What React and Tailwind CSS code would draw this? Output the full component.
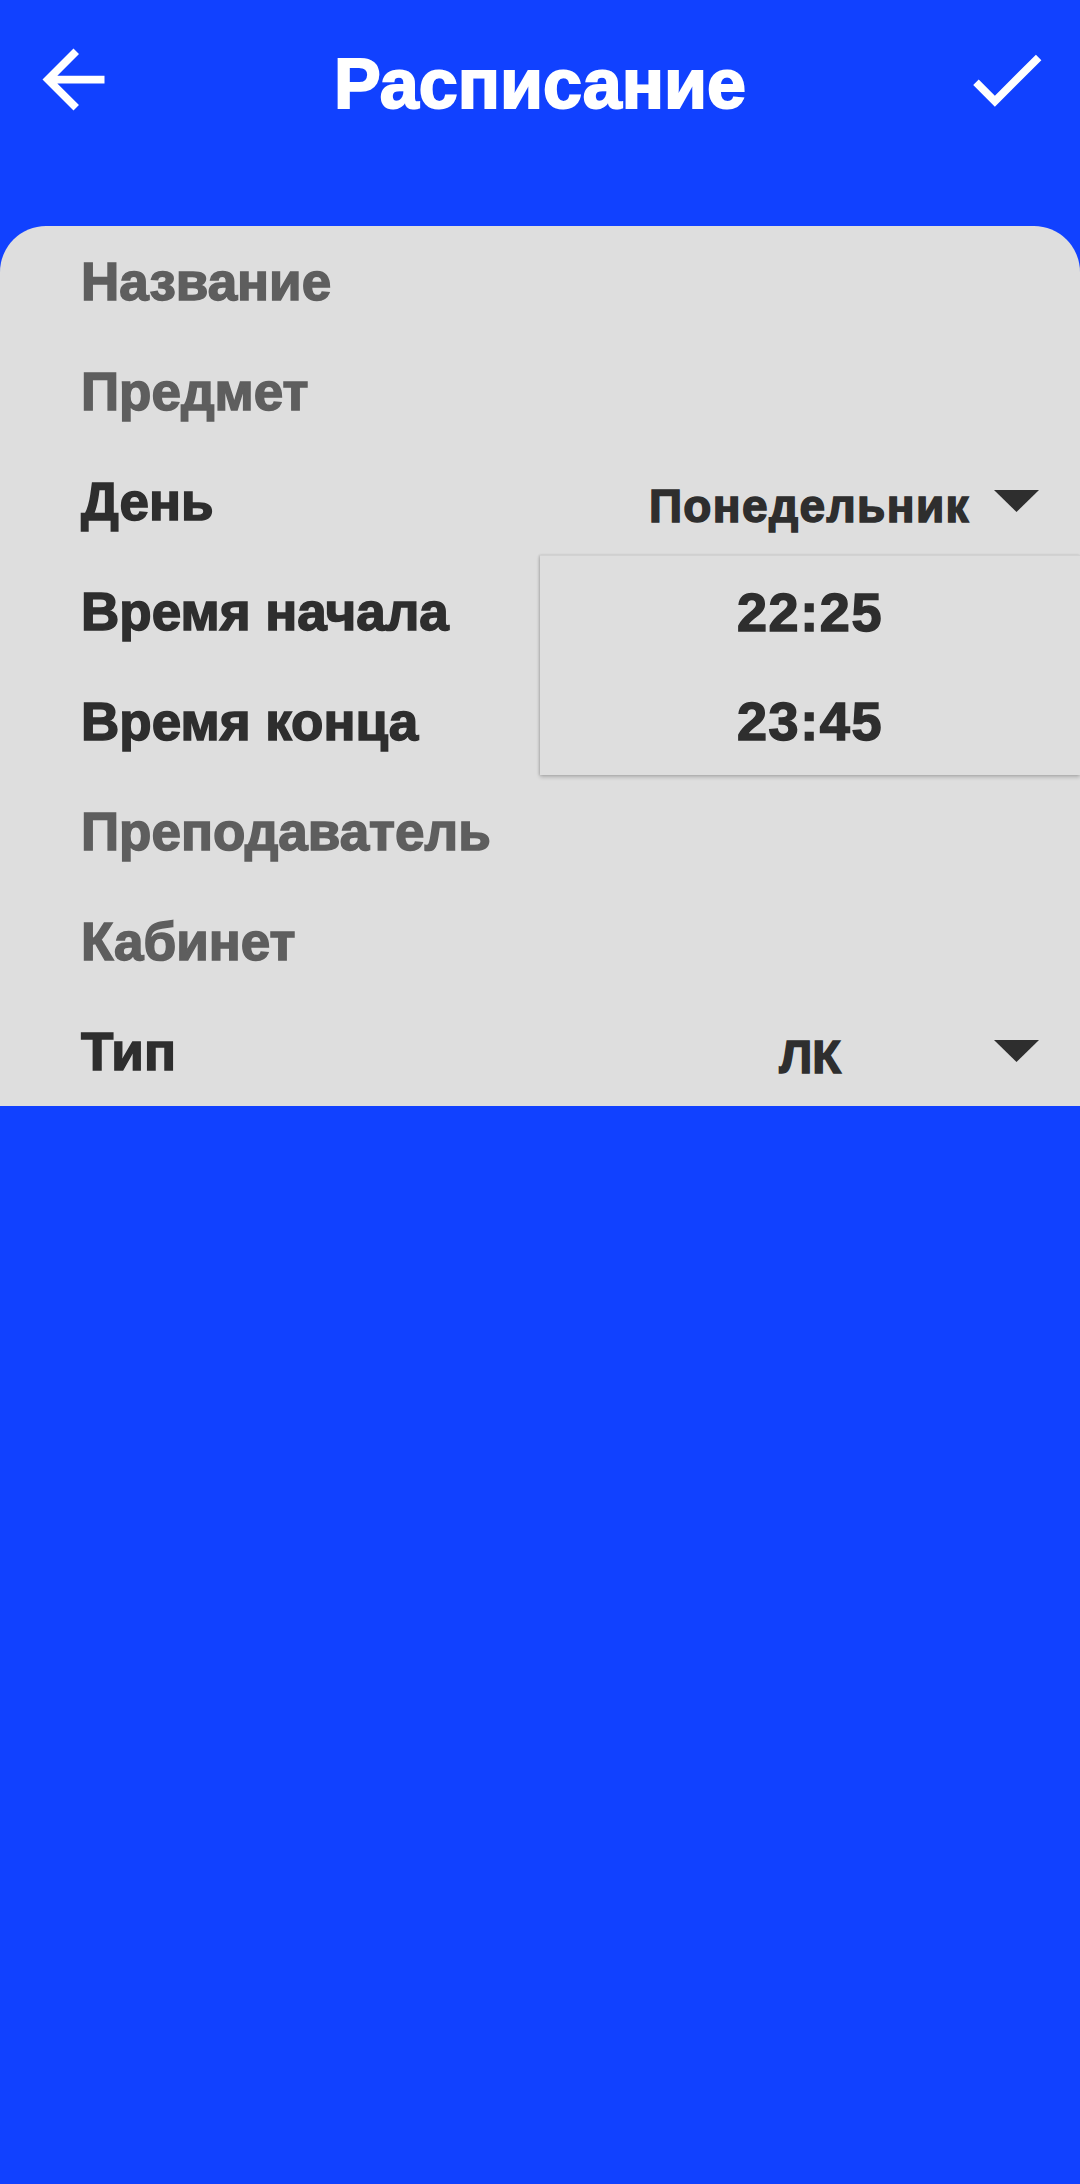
import React from "react";

const FONT = { fontFamily: '"Liberation Sans", Arial, sans-serif' };

// Material-style icons drawn at 93px
const BackIcon = () => (
  <svg className="w-[93px] h-[93px]" viewBox="0 0 24 24" fill="#ffffff">
    <path d="M20 11H7.83l5.59-5.59L12 4l-8 8 8 8 1.41-1.41L7.83 13H20v-2z" />
  </svg>
);

const CheckIcon = () => (
  <svg className="w-[93px] h-[93px]" viewBox="0 0 24 24" fill="#ffffff">
    <path d="M9 16.17L4.83 12l-1.42 1.41L9 19 21 7l-1.41-1.41z" />
  </svg>
);

const Caret = () => (
  <svg className="w-[45px] h-[22px] shrink-0" viewBox="0 0 45 22">
    <polygon points="0,0 45,0 22.5,22" fill="#2e2e2e" />
  </svg>
);

const Label = ({ children, muted }) => (
  <span
    className={
      "text-[53px] font-bold leading-none [-webkit-text-stroke:1.5px_currentColor] " +
      (muted ? "text-[#5e5e5e]" : "text-[#2e2e2e]")
    }
  >
    {children}
  </span>
);

const Row = ({ children }) => (
  <div className="h-[110px] flex items-center justify-between pl-[81px]">{children}</div>
);

export default function App() {
  return (
    <div className="w-[1080px] min-h-[2184px] bg-[#1141ff]" style={FONT}>
      {/* toolbar */}
      <div className="h-[226px] pt-[33px]">
        <div className="flex items-center justify-between px-[27px] h-[93px]">
          <BackIcon />
          <h1 className="pt-[9px] text-[70px] font-bold leading-none text-white [-webkit-text-stroke:2px_currentColor]">
            Расписание
          </h1>
          <CheckIcon />
        </div>
      </div>

      {/* form card */}
      <div className="bg-[#dedede] rounded-tl-[46px] rounded-tr-[46px]">
        <Row>
          <Label muted>Название</Label>
        </Row>
        <Row>
          <Label muted>Предмет</Label>
        </Row>
        <Row>
          <Label>День</Label>
          <div className="flex items-center gap-[24px] pr-[41px]">
            <span className="pt-[10px] text-[46px] font-bold leading-none tracking-[0.03em] text-[#2e2e2e] [-webkit-text-stroke:1.5px_currentColor]">
              Понедельник
            </span>
            <Caret />
          </div>
        </Row>

        <div className="flex">
          <div className="flex-1">
            <Row>
              <Label>Время начала</Label>
            </Row>
            <Row>
              <Label>Время конца</Label>
            </Row>
          </div>
          <div className="w-[540px] h-[220px] -mt-px bg-[#dedede] border-t border-[#d2d2d2] shadow-[0_2px_4px_rgba(0,0,0,0.22),-1px_0_2px_rgba(0,0,0,0.12)] flex flex-col">
            <div className="h-[110px] flex items-center justify-center">
              <span className="pt-[2px] text-[54px] font-bold leading-none tracking-[0.03em] text-[#2e2e2e] [-webkit-text-stroke:1.5px_currentColor]">
                22:25
              </span>
            </div>
            <div className="h-[110px] flex items-center justify-center">
              <span className="pt-[2px] text-[54px] font-bold leading-none tracking-[0.03em] text-[#2e2e2e] [-webkit-text-stroke:1.5px_currentColor]">
                23:45
              </span>
            </div>
          </div>
        </div>

        <Row>
          <Label muted>Преподаватель</Label>
        </Row>
        <Row>
          <Label muted>Кабинет</Label>
        </Row>
        <Row>
          <Label>Тип</Label>
          <div className="w-[540px] grid grid-cols-[1fr_auto_1fr] items-center">
            <span />
            <span className="pt-[10px] text-[47px] font-bold leading-none text-[#2e2e2e] [-webkit-text-stroke:1.5px_currentColor]">
              ЛК
            </span>
            <div className="flex justify-end pr-[41px]">
              <Caret />
            </div>
          </div>
        </Row>
      </div>
    </div>
  );
}
